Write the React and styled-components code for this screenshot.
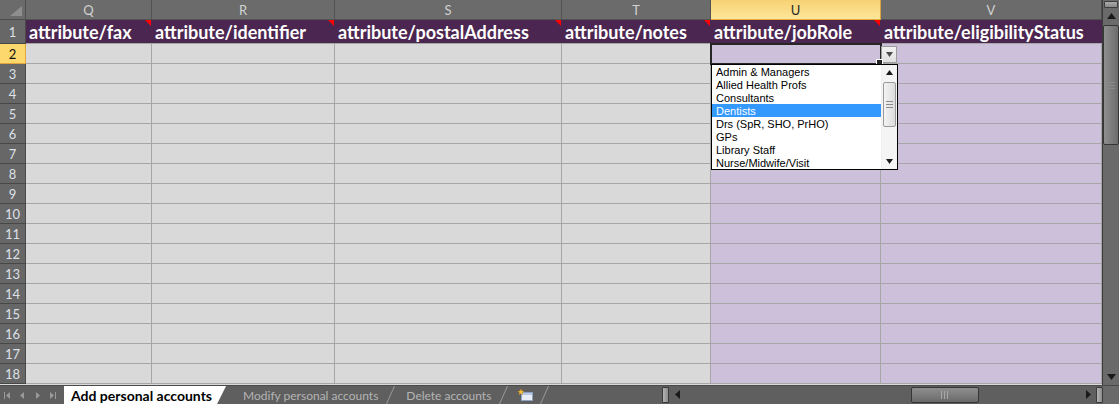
import { Fragment } from 'react';
import styled, { createGlobalStyle } from 'styled-components';

const GlobalStyle = createGlobalStyle`
  html, body {
    margin: 0;
    padding: 0;
    background: #5f5f5f;
  }
  * {
    box-sizing: border-box;
  }
  body {
    font-family: Lato, "Liberation Sans", sans-serif;
  }
`;

const columns = [
  { letter: 'Q', title: 'attribute/fax', tone: 'grey', note: true },
  { letter: 'R', title: 'attribute/identifier', tone: 'grey', note: true },
  { letter: 'S', title: 'attribute/postalAddress', tone: 'grey', note: true },
  { letter: 'T', title: 'attribute/notes', tone: 'grey', note: true },
  { letter: 'U', title: 'attribute/jobRole', tone: 'purple', note: true, active: true },
  { letter: 'V', title: 'attribute/eligibilityStatus', tone: 'purple' },
];

const jobRoles = [
  'Admin & Managers',
  'Allied Health Profs',
  'Consultants',
  'Dentists',
  'Drs (SpR, SHO, PrHO)',
  'GPs',
  'Library Staff',
  'Nurse/Midwife/Visit',
];

const rows = Array.from({ length: 17 }, (_, i) => i + 2);

const sheets = ['Add personal accounts', 'Modify personal accounts', 'Delete accounts'];

const Arrow = ({ dir = 'down', size = 7, color = '#1a1a1a' }) => {
  const h = Math.ceil(size / 2) + 1;
  const pts = {
    down: `0,0 ${size},0 ${size / 2},${h}`,
    up: `0,${h} ${size},${h} ${size / 2},0`,
  }[dir];
  return (
    <svg width={size} height={h} viewBox={`0 0 ${size} ${h}`}>
      <polygon points={pts} fill={color} />
    </svg>
  );
};

const SideArrow = ({ dir = 'left', color = '#1a1a1a' }) => (
  <svg width="5" height="9" viewBox="0 0 5 9">
    <polygon points={dir === 'left' ? '5,0 5,9 0,4.5' : '0,0 0,9 5,4.5'} fill={color} />
  </svg>
);

const NavIcon = ({ kind }) => {
  const c = '#9a9a9a';
  return (
    <svg width="9" height="9" viewBox="0 0 9 9">
      {kind === 'first' && (
        <>
          <rect x="1" y="1" width="1" height="7" fill={c} />
          <polygon points="7,1 7,8 3,4.5" fill={c} />
        </>
      )}
      {kind === 'prev' && <polygon points="6,1 6,8 2,4.5" fill={c} />}
      {kind === 'next' && <polygon points="3,1 3,8 7,4.5" fill={c} />}
      {kind === 'last' && (
        <>
          <polygon points="2,1 2,8 6,4.5" fill={c} />
          <rect x="7" y="1" width="1" height="7" fill={c} />
        </>
      )}
    </svg>
  );
};

const InsertSheetIcon = () => (
  <svg width="16" height="13" viewBox="0 0 16 13">
    <rect x="3.5" y="3.5" width="11" height="8" fill="#e9eef6" stroke="#8ea2c2" />
    <rect x="4" y="4" width="10" height="2" fill="#b9cbe6" />
    <polygon
      points="3,0 3.9,2 6,2.2 4.4,3.5 5,5.6 3,4.4 1,5.6 1.6,3.5 0,2.2 2.1,2"
      fill="#f6c342"
      stroke="#d88a10"
      strokeWidth="0.4"
    />
  </svg>
);

export default function App() {
  return (
    <>
      <GlobalStyle />
      <Window>
        <Workspace>
          <Sheet>
            <Corner>
              <CornerMark />
            </Corner>
            {columns.map((c) => (
              <ColHeader key={c.letter} $active={c.active}>
                {c.letter}
              </ColHeader>
            ))}

            <RowHeader>1</RowHeader>
            {columns.map((c) => (
              <TitleCell key={c.letter}>
                {c.title}
                {c.note && <NoteMark />}
              </TitleCell>
            ))}

            {rows.map((r) => (
              <Fragment key={r}>
                <RowHeader $active={r === 2}>{r}</RowHeader>
                {columns.map((c) => {
                  const selected = r === 2 && c.active;
                  return (
                    <Cell key={c.letter} $tone={c.tone} $selected={selected}>
                      {selected && (
                        <>
                          <DropButton>
                            <Arrow dir="down" size={7} color="#4a4a4a" />
                          </DropButton>
                          <ListBox>
                            <Options>
                              {jobRoles.map((role) => (
                                <Option key={role} $highlighted={role === 'Dentists'}>
                                  {role}
                                </Option>
                              ))}
                            </Options>
                            <ListScroll>
                              <ListArrow>
                                <Arrow dir="up" size={7} />
                              </ListArrow>
                              <ListTrack>
                                <ListThumb>
                                  <Grip $vertical />
                                </ListThumb>
                              </ListTrack>
                              <ListArrow>
                                <Arrow dir="down" size={7} />
                              </ListArrow>
                            </ListScroll>
                          </ListBox>
                        </>
                      )}
                    </Cell>
                  );
                })}
              </Fragment>
            ))}
          </Sheet>

          <VScroll>
            <SplitBox />
            <VArrow>
              <Arrow dir="up" size={9} />
            </VArrow>
            <VTrack>
              <VThumb>
                <Grip $vertical />
              </VThumb>
            </VTrack>
            <VArrow>
              <Arrow dir="down" size={9} />
            </VArrow>
          </VScroll>
        </Workspace>

        <BottomBar>
          <TabStrip>
            <NavButtons>
              <NavIcon kind="first" />
              <NavIcon kind="prev" />
              <NavIcon kind="next" />
              <NavIcon kind="last" />
            </NavButtons>
            {sheets.map((name, i) => (
              <Tab key={name} $active={i === 0}>
                {name}
              </Tab>
            ))}
            <Tab $icon>
              <InsertSheetIcon />
            </Tab>
          </TabStrip>
          <HScroll>
            <SplitHandle />
            <HArrow>
              <SideArrow dir="left" />
            </HArrow>
            <HTrack>
              <HThumb $offset={226}>
                <Grip />
              </HThumb>
            </HTrack>
            <HArrow>
              <SideArrow dir="right" />
            </HArrow>
            <SplitHandle />
          </HScroll>
          <ScrollCorner />
        </BottomBar>
      </Window>
    </>
  );
}

const Window = styled.div`
  width: 1119px;
  height: 404px;
  display: flex;
  flex-direction: column;
  overflow: hidden;
  background: #5f5f5f;
`;

const Workspace = styled.div`
  height: 385px;
  display: flex;
`;

const Sheet = styled.div`
  width: 1102px;
  display: grid;
  grid-template-columns: 26px 126px 183px 227px 149px 170px 221px;
  grid-template-rows: 20px 24px repeat(17, 20px);
  align-content: start;
  overflow: hidden;
  background: #d9d9d9;
`;

const Corner = styled.div`
  position: relative;
  background: #6b6b6b;
  border-right: 1px solid #4d4d4d;
  border-bottom: 1px solid #4d4d4d;
`;

const CornerMark = styled.div`
  position: absolute;
  right: 3px;
  bottom: 3px;
  width: 0;
  height: 0;
  border-left: 12px solid transparent;
  border-bottom: 10px solid #8e8e8e;
`;

const ColHeader = styled.div`
  display: flex;
  align-items: center;
  justify-content: center;
  font-size: 13px;
  color: ${({ $active }) => ($active ? '#2a2a2a' : '#d2d2d2')};
  background: ${({ $active }) =>
    $active ? 'linear-gradient(#f7d274, #fde699)' : '#6b6b6b'};
  border-right: 1px solid ${({ $active }) => ($active ? '#d9a13f' : '#525252')};
  border-bottom: 1px solid ${({ $active }) => ($active ? '#e8a83a' : '#525252')};
`;

const RowHeader = styled.div`
  display: flex;
  align-items: center;
  justify-content: center;
  font-size: 13px;
  color: ${({ $active }) => ($active ? '#111' : '#dde1ea')};
  background: ${({ $active }) => ($active ? '#fdd86c' : '#676767')};
  border-right: 1px solid ${({ $active }) => ($active ? '#e2a43c' : '#4a4a4a')};
  border-bottom: 1px solid ${({ $active }) => ($active ? '#e2a43c' : '#474747')};
`;

const TitleCell = styled.div`
  position: relative;
  padding-left: 3px;
  line-height: 25px;
  font-size: 18px;
  font-weight: 700;
  color: #ffffff;
  white-space: nowrap;
  background: #4b2650;
  border-bottom: 1px solid #a6a6a6;
`;

const NoteMark = styled.span`
  position: absolute;
  top: 0;
  right: 1px;
  width: 0;
  height: 0;
  border-left: 6px solid transparent;
  border-top: 6px solid #ff0000;
`;

const Cell = styled.div`
  position: relative;
  background: ${({ $tone }) => ($tone === 'purple' ? '#ccc0da' : '#d9d9d9')};
  border-right: 1px solid #a6a6a6;
  border-bottom: 1px solid #a6a6a6;

  ${({ $selected }) =>
    $selected &&
    `
    z-index: 5;
    outline: 2px solid #262626;
    outline-offset: -1px;

    &::after {
      content: '';
      position: absolute;
      right: -3px;
      bottom: -3px;
      width: 5px;
      height: 5px;
      background: #262626;
      border: 1px solid #ffffff;
    }
  `}
`;

const DropButton = styled.div`
  position: absolute;
  top: 2px;
  left: calc(100% + 1px);
  width: 16px;
  height: 17px;
  display: flex;
  align-items: center;
  justify-content: center;
  background: linear-gradient(#f2f2f2, #e0e0e0);
  border: 1px solid #9c9c9c;
`;

const ListBox = styled.div`
  position: absolute;
  top: 20px;
  left: 0;
  width: 187px;
  height: 106px;
  display: flex;
  background: #ffffff;
  border: 1px solid #000000;
  z-index: 6;
`;

const Options = styled.div`
  flex: 1;
  overflow: hidden;
`;

const Option = styled.div`
  height: 13px;
  padding-left: 4px;
  font-family: "Liberation Sans", Arial, sans-serif;
  font-size: 11px;
  line-height: 14px;
  white-space: nowrap;
  color: ${({ $highlighted }) => ($highlighted ? '#ffffff' : '#000000')};
  background: ${({ $highlighted }) => ($highlighted ? '#3399ff' : 'transparent')};
`;

const ListScroll = styled.div`
  width: 16px;
  display: flex;
  flex-direction: column;
  background: #f4f4f4;
  border-left: 1px solid #f0f0f0;
`;

const ListArrow = styled.div`
  height: 15px;
  display: flex;
  align-items: center;
  justify-content: center;
`;

const ListTrack = styled.div`
  flex: 1;
  padding: 2px 1px;
`;

const ListThumb = styled.div`
  height: 45px;
  display: flex;
  align-items: center;
  justify-content: center;
  background: linear-gradient(90deg, #f3f3f3, #dcdcdc);
  border: 1px solid #9a9a9a;
  border-radius: 2px;
`;

const Grip = styled.div`
  ${({ $vertical }) =>
    $vertical
      ? `
    width: 7px;
    height: 7px;
    background: repeating-linear-gradient(#8a8a8a 0 1px, transparent 1px 3px);
  `
      : `
    width: 9px;
    height: 8px;
    background: repeating-linear-gradient(90deg, #a8a8a8 0 1px, transparent 1px 3px);
  `}
`;

const VScroll = styled.div`
  width: 17px;
  display: flex;
  flex-direction: column;
  background: #6a6a6a;
  border-left: 1px solid #3a3a3a;
`;

const SplitBox = styled.div`
  height: 7px;
  margin: 1px 1px 0;
  background: linear-gradient(#a9a9a9, #8a8a8a);
  border: 1px solid #3c3c3c;
  border-radius: 1px;
`;

const VArrow = styled.div`
  height: 16px;
  display: flex;
  align-items: center;
  justify-content: center;
`;

const VTrack = styled.div`
  flex: 1;
  padding: 1px 0;
`;

const VThumb = styled.div`
  height: 120px;
  display: flex;
  align-items: center;
  justify-content: center;
  background: linear-gradient(90deg, #8f8f8f, #6c6c6c);
  border: 1px solid #363636;
  border-radius: 2px;
`;

const BottomBar = styled.div`
  flex: 1;
  display: flex;
  background: #5f5f5f;
  border-top: 1px solid #4a4a4a;
`;

const TabStrip = styled.div`
  width: 662px;
  display: flex;
  align-items: stretch;
`;

const NavButtons = styled.div`
  width: 64px;
  display: flex;
  align-items: center;
  gap: 6px;
  padding-left: 3px;
`;

const Tab = styled.div`
  position: relative;
  display: flex;
  align-items: center;
  white-space: nowrap;
  font-size: ${({ $active }) => ($active ? '14px' : '12px')};
  margin-right: ${({ $active }) => ($active ? '6px' : '0')};
  padding: ${({ $active, $icon }) =>
    $active ? '0 14px 0 7px' : $icon ? '0 15px 0 10px' : '0 17px 0 11px'};
  font-weight: ${({ $active }) => ($active ? 700 : 400)};
  color: ${({ $active }) => ($active ? '#000000' : '#b4b4b4')};
  background: ${({ $active }) => ($active ? '#ffffff' : 'transparent')};
  z-index: ${({ $active }) => ($active ? 2 : 1)};
  ${({ $active }) =>
    $active &&
    'clip-path: polygon(0 0, 100% 0, calc(100% - 9px) 100%, 0 100%);'}

  &::after {
    content: '';
    position: absolute;
    top: 0;
    bottom: 0;
    right: 4px;
    width: 1px;
    background: ${({ $active }) => ($active ? 'transparent' : '#9a9a9a')};
    transform: skewX(-24deg);
  }
`;

const HScroll = styled.div`
  flex: 1;
  display: flex;
  align-items: center;
  padding-bottom: 1px;
`;

const SplitHandle = styled.div`
  width: 7px;
  height: 16px;
  background: linear-gradient(90deg, #b4b4b4, #8c8c8c);
  border: 1px solid #3a3a3a;
  border-radius: 1px;
`;

const HArrow = styled.div`
  width: 16px;
  height: 100%;
  display: flex;
  align-items: center;
  justify-content: center;
`;

const HTrack = styled.div`
  flex: 1;
  height: 100%;
  display: flex;
  align-items: center;
`;

const HThumb = styled.div`
  margin-left: ${({ $offset }) => $offset}px;
  width: 68px;
  height: 16px;
  display: flex;
  align-items: center;
  justify-content: center;
  background: linear-gradient(#8e8e8e, #6a6a6a);
  border: 1px solid #363636;
  border-radius: 2px;
`;

const ScrollCorner = styled.div`
  width: 16px;
  background: #6a6a6a;
`;
